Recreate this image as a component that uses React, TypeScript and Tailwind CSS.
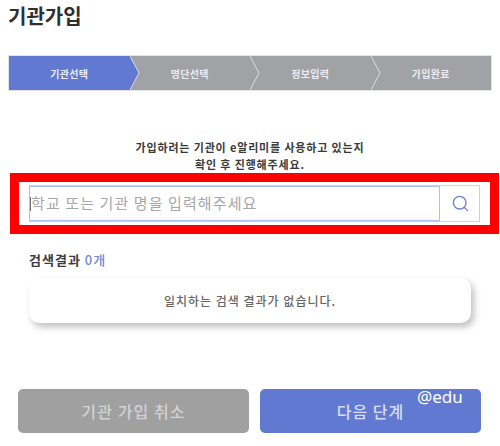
import { Search } from "lucide-react";

const steps = ["기관선택", "명단선택", "정보입력", "가입완료"];

export default function App() {
  return (
    <div className="relative flex h-[446px] w-[500px] flex-col overflow-hidden bg-white font-['Noto_Sans_CJK_KR','Noto_Sans',sans-serif] text-[#333]">
      <h1 className="mt-[2px] ml-2 h-[27px] text-[20px] leading-[27px] font-bold text-[#2f2f2f]">기관가입</h1>

      <div className="mt-[26px] ml-2 flex h-[36px] w-[484px] border border-[#e4e4e6] bg-[#a1a2a6]">
        {steps.map((s, i) => (
          <div key={s} className={`relative flex flex-1 items-center justify-center text-[10px] font-bold tracking-[0.3px] text-white ${i === 0 ? "bg-[#6279d1]" : ""}`}>
            <span className="relative z-10 text-[#ecedf2]">{s}</span>
            {i < 3 && (
              <svg className="absolute top-0 left-full z-10 h-full w-[10px]" viewBox="0 0 10 34" preserveAspectRatio="none">
                <path d="M0 0 L9 17 L0 34 Z" fill={i === 0 ? "#6279d1" : "#a1a2a6"} />
                <path d="M0 0 L9 17 L0 34" fill="none" stroke="#dcdce0" strokeWidth="1" />
              </svg>
            )}
          </div>
        ))}
      </div>

      <p className="mt-[48px] text-center text-[11px] leading-[17px] font-bold tracking-[0.85px] text-[#3a3a3a]">
        가입하려는 기관이 e알리미를 사용하고 있는지
        <br />
        확인 후 진행해주세요.
      </p>

      <div className="ml-[10px] h-[61px] w-[489px] border-[9px] border-[#fe0000] bg-white">
        <div className="mt-[3px] ml-[10px] flex h-[37px] w-[451px] border border-l-0 border-[#d2d2d5]">
          <div className="flex h-full flex-1 items-center border border-[#a8c0f2] text-[15px] tracking-[1.1px] text-[#a6a6a8]">
            <span className="h-[14px] w-px bg-[#777]" />
            학교 또는 기관 명을 입력해주세요
          </div>
          <div className="flex w-[39px] items-center justify-center pl-[2px] text-[#6f80c9]">
            <Search size={19} strokeWidth={1.7} />
          </div>
        </div>
      </div>

      <div className="mt-[18px] ml-[29px] text-[13px] leading-[16px] font-bold tracking-[1px] text-[#3c3c3c]">
        검색결과 <span className="font-medium text-[#7186d6]">0개</span>
      </div>

      <div className="mt-[10px] ml-[29px] flex h-[45px] w-[442px] items-center justify-center rounded-[10px] bg-white text-[12px] font-medium tracking-[1px] text-[#666] shadow-[3px_4px_7px_rgba(0,0,0,0.25)]">
        일치하는 검색 결과가 없습니다.
      </div>

      <div className="mt-[66px] ml-[18px] flex gap-[11px]">
        <button className="h-[44px] w-[231px] rounded-[5px] bg-[#a0a0a0] text-[16px] font-medium tracking-[1.1px] text-[#d2d2d2]">기관 가입 취소</button>
        <button className="h-[44px] w-[221px] rounded-[5px] bg-[#6279d1] text-[16px] font-medium tracking-[1px] text-[#d8ddf3]">다음 단계</button>
      </div>

      <span className="absolute top-[385px] left-[417px] font-['Noto_Sans',sans-serif] text-[17px] leading-[24px] text-white">@edu</span>
    </div>
  );
}
